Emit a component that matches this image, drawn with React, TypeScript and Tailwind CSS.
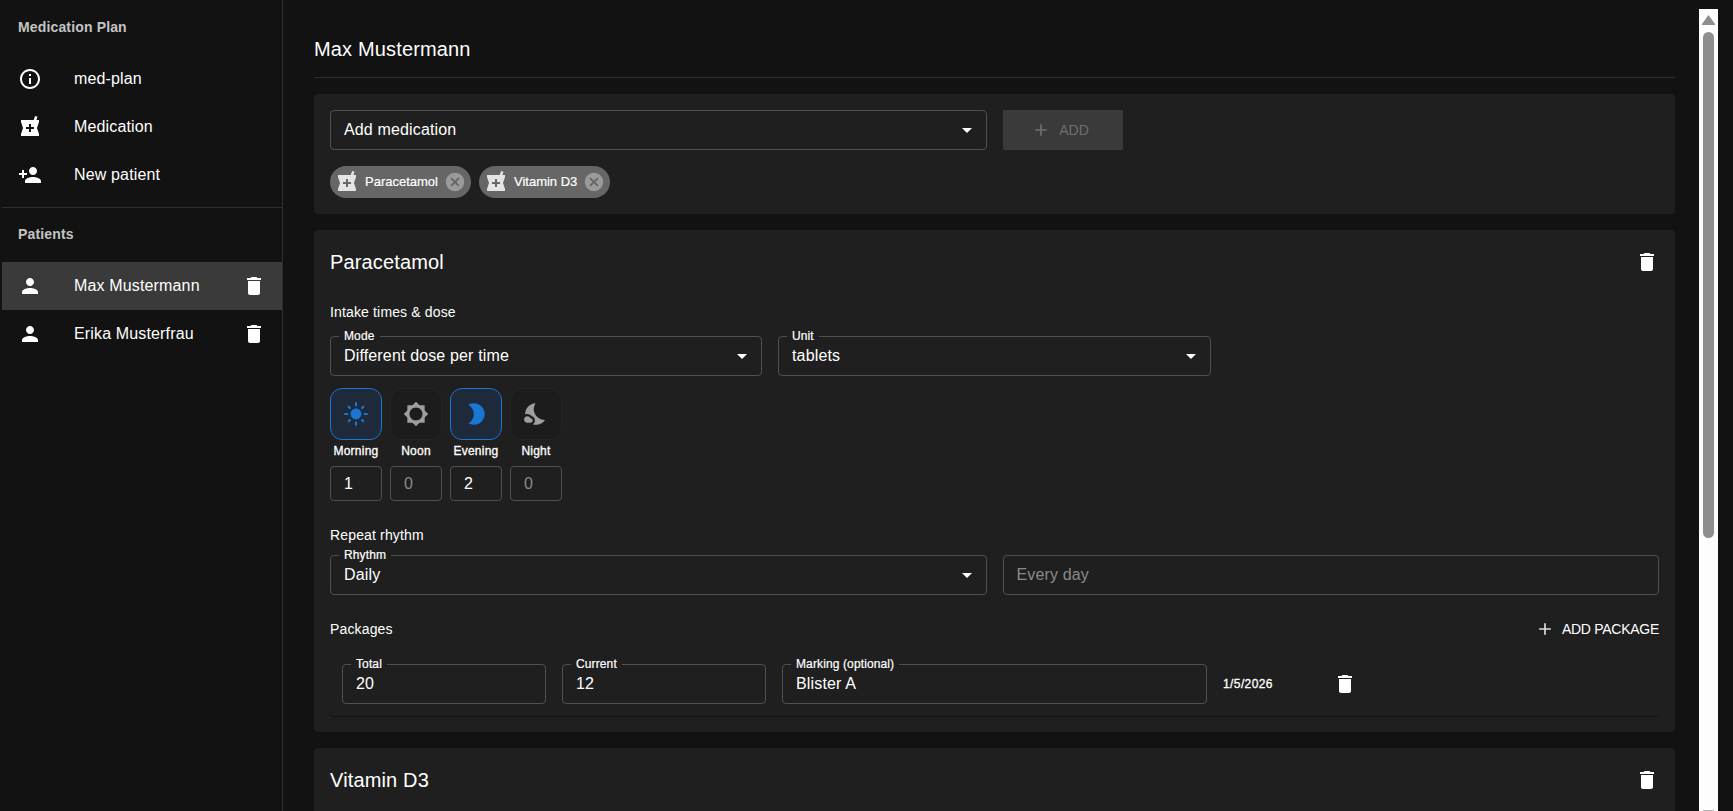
import type { ReactNode } from 'react'
import {
  MdAdd,
  MdArrowDropDown,
  MdBrightness2,
  MdBrightness5,
  MdCancel,
  MdDelete,
  MdInfoOutline,
  MdLightMode,
  MdLocalPharmacy,
  MdNightsStay,
  MdPerson,
  MdPersonAdd,
} from 'react-icons/md'

const slots = [
  { name: 'Morning', value: '1', active: true, Icon: MdLightMode },
  { name: 'Noon', value: '0', active: false, Icon: MdBrightness5 },
  { name: 'Evening', value: '2', active: true, Icon: MdBrightness2 },
  { name: 'Night', value: '0', active: false, Icon: MdNightsStay },
]

function NavRow({ icon, label, active, trash }: { icon: ReactNode; label: string; active?: boolean; trash?: boolean }) {
  return (
    <div className={`flex h-12 items-center pl-4 pr-4 ${active ? 'bg-[#3a3a3a]' : ''}`}>
      <span className="flex w-14 shrink-0 items-center text-white">{icon}</span>
      <span className="flex-1 text-base tracking-[0.00938em] text-white">{label}</span>
      {trash && <MdDelete size={24} className="text-white" />}
    </div>
  )
}

function Field({
  label,
  value,
  select,
  muted,
  className,
}: {
  label?: string
  value: string
  select?: boolean
  muted?: boolean
  className?: string
}) {
  return (
    <div className={`relative flex h-10 items-center rounded border border-[#505050] pl-[13px] pr-[7px] ${className ?? ''}`}>
      {label && (
        <span className="absolute -top-[9px] left-[8px] bg-[#1f1f1f] px-[5px] text-xs leading-4 tracking-[0.01em] text-white [-webkit-text-stroke:0.2px_white]">
          {label}
        </span>
      )}
      <span className={`flex-1 text-base tracking-[0.00938em] ${muted ? 'text-[#8a8a8a]' : 'text-white'}`}>{value}</span>
      {select && <MdArrowDropDown size={24} className="text-white" />}
    </div>
  )
}

function Chip({ label }: { label: string }) {
  return (
    <div className="flex h-8 items-center rounded-full bg-[#666666] pl-[5px] pr-[5px]">
      <MdLocalPharmacy size={24} className="text-[#e4e4e4]" />
      <span className="pr-[6px] pl-[6px] text-[13px] text-white [-webkit-text-stroke:0.2px_white]">{label}</span>
      <MdCancel size={22} className="text-[#9a9a9a]" />
    </div>
  )
}

function DaySlot({ slot }: { slot: (typeof slots)[number] }) {
  const { Icon } = slot
  return (
    <div className="flex w-[52px] flex-col items-center">
      <div
        className={`flex h-[52px] w-[52px] items-center justify-center rounded-xl border ${
          slot.active ? 'border-[#1976d2] bg-[#1e2a3a] text-[#1976d2]' : 'border-[#252525] bg-[#1c1c1c] text-[#9e9e9e]'
        }`}
      >
        <Icon size={26} />
      </div>
      <span className="mt-[2px] text-xs leading-[18px] tracking-[0.02em] text-white [-webkit-text-stroke:0.3px_white]">
        {slot.name}
      </span>
      <div className="mt-[6px] flex h-[35px] w-full items-center rounded border border-[#505050] pl-[13px]">
        <span className={`text-base ${slot.value === '0' ? 'text-[#8a8a8a]' : 'text-white'}`}>{slot.value}</span>
      </div>
    </div>
  )
}

function CardTitle({ title }: { title: string }) {
  return (
    <div className="flex h-7 items-center justify-between">
      <h2 className="text-xl tracking-[0.0075em] text-white">{title}</h2>
      <MdDelete size={24} className="text-white" />
    </div>
  )
}

export default function App() {
  return (
    <div className="flex h-screen overflow-hidden bg-[#121212] font-['Liberation_Sans',Arial,sans-serif]">
      <aside className="w-[283px] shrink-0 border-r border-[#2e2e2e] pl-[2px]">
        <p className="pt-[19px] pl-4 text-sm leading-4 font-bold tracking-[0.01071em] text-[#c4c4c4]">Medication Plan</p>
        <nav className="mt-[20px]">
          <NavRow icon={<MdInfoOutline size={24} />} label="med-plan" />
          <NavRow icon={<MdLocalPharmacy size={24} />} label="Medication" />
          <NavRow icon={<MdPersonAdd size={24} />} label="New patient" />
        </nav>
        <div className="mt-[8px] border-t border-[#2e2e2e]" />
        <p className="mt-[18px] pl-4 text-sm leading-4 font-bold tracking-[0.01071em] text-[#c4c4c4]">Patients</p>
        <div className="mt-[20px]">
          <NavRow icon={<MdPerson size={24} />} label="Max Mustermann" active trash />
          <NavRow icon={<MdPerson size={24} />} label="Erika Musterfrau" trash />
        </div>
      </aside>

      <main className="min-w-0 flex-1 pt-[35px] pr-6 pl-[31px]">
        <header className="border-b border-[#2e2e2e] pb-[14px]">
          <h1 className="text-xl leading-7 tracking-[0.0075em] text-white">Max Mustermann</h1>
        </header>

        <section className="mt-4 rounded bg-[#1f1f1f] p-4">
          <div className="grid grid-cols-2 gap-4">
            <Field value="Add medication" select />
            <div>
              <button className="flex h-10 w-[120px] items-center justify-center gap-2 bg-[#3a3a3a] pr-[5px] text-sm text-[#6f6f6f]">
                <MdAdd size={20} />
                ADD
              </button>
            </div>
          </div>
          <div className="mt-4 flex gap-2">
            <Chip label="Paracetamol" />
            <Chip label="Vitamin D3" />
          </div>
        </section>

        <section className="mt-4 rounded bg-[#1f1f1f] px-4 pt-[18px] pb-4">
          <CardTitle title="Paracetamol" />
          <p className="mt-[26px] text-sm leading-5 tracking-[0.01071em] text-white">Intake times & dose</p>
          <div className="mt-[14px] flex gap-4">
            <Field label="Mode" value="Different dose per time" select className="w-[432px]" />
            <Field label="Unit" value="tablets" select className="w-[433px]" />
          </div>
          <div className="mt-3 flex gap-2">
            {slots.map((slot) => (
              <DaySlot key={slot.name} slot={slot} />
            ))}
          </div>
          <p className="mt-6 text-sm leading-5 tracking-[0.01071em] text-white">Repeat rhythm</p>
          <div className="mt-[10px] grid grid-cols-2 gap-4">
            <Field label="Rhythm" value="Daily" select />
            <Field value="Every day" muted />
          </div>
          <div className="mt-6 flex h-5 items-center justify-between">
            <span className="text-sm tracking-[0.01071em] text-white">Packages</span>
            <span className="flex items-center gap-[7px] text-sm tracking-[-0.02em] text-white">
              <MdAdd size={20} className="text-[#e0e0e0]" />
              ADD PACKAGE
            </span>
          </div>
          <div className="mt-[11px] flex h-[66px] items-start rounded pt-[14px] pl-3 shadow-[0_1px_1px_rgba(0,0,0,0.45)]">
            <Field label="Total" value="20" className="w-[204px]" />
            <Field label="Current" value="12" className="ml-4 w-[204px]" />
            <Field label="Marking (optional)" value="Blister A" className="ml-4 w-[425px]" />
            <span className="ml-4 flex h-10 w-[110px] items-center text-xs tracking-[0.03333em] text-white [-webkit-text-stroke:0.3px_white]">
              1/5/2026
            </span>
            <span className="flex h-10 items-center">
              <MdDelete size={24} className="text-white" />
            </span>
          </div>
        </section>

        <section className="mt-4 h-[300px] rounded bg-[#1f1f1f] px-4 pt-[18px]">
          <CardTitle title="Vitamin D3" />
        </section>
      </main>

      <div className="mt-[9px] mr-[15px] flex w-[19px] shrink-0 flex-col items-center bg-[#fdfdfd] pt-[6px]">
        <svg width="13" height="10" viewBox="0 0 13 10" className="shrink-0 text-[#8e8e8e]">
          <path d="M6.5 0 13 9v1H0V9z" fill="currentColor" />
        </svg>
        <div className="mt-[7px] h-[506px] w-[11px] shrink-0 rounded-full bg-[#8e8e8e]" />
        <div className="mt-auto h-px w-[11px] bg-[#b0b0b0]" />
      </div>
    </div>
  )
}
